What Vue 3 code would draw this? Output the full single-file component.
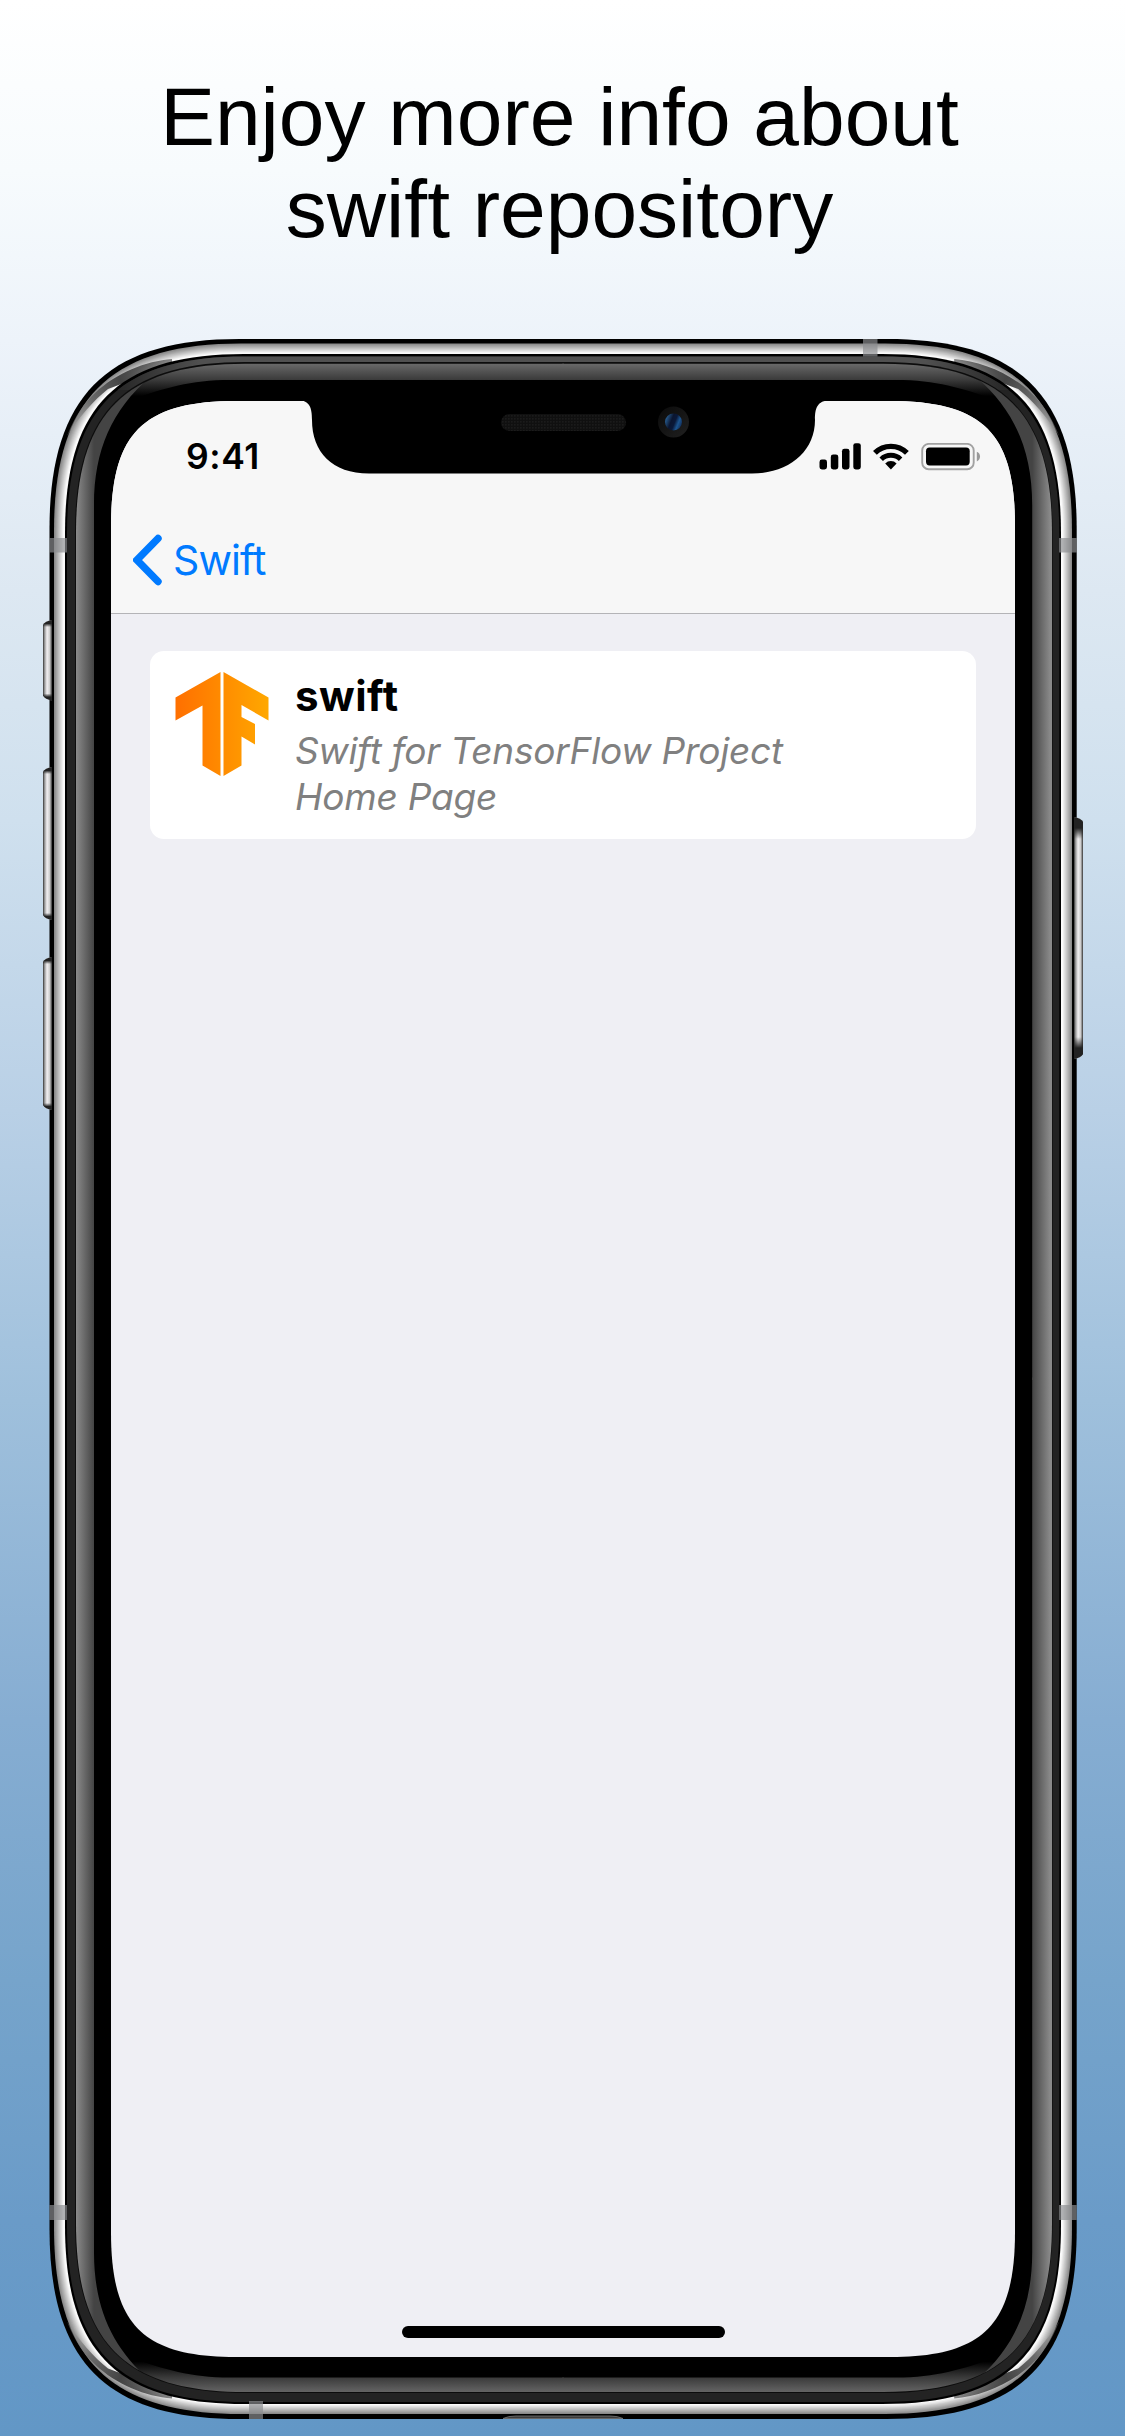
<script setup>
// Continuous-corner rounded rectangle
function squircle(l, t, r, b, a, k) {
  return `M${l} ${t + a}C${l} ${t + k} ${l + k} ${t} ${l + a} ${t}H${r - a}C${r - k} ${t} ${r} ${t + k} ${r} ${t + a}V${b - a}C${r} ${b - k} ${r - k} ${b} ${r - a} ${b}H${l + a}C${l + k} ${b} ${l} ${b - k} ${l} ${b - a}Z`
}

const outer = squircle(49.5, 339, 1076.7, 2419, 190, 57)
const steel = Array.from({ length: 11 }, (_, i) => {
  const v = Math.round(138 + Math.min(1, i / 9) * 112)
  return {
    d: squircle(54 + i, 343.5 + i, 1072 - i, 2414 - i, 187 - i * 0.8, 55.5 - i * 0.3),
    fill: `rgb(${v},${v},${v})`,
  }
})
const gap = squircle(65, 354, 1061, 2404, 179, 52)
const band = squircle(67, 356.5, 1059.3, 2402, 177, 52)
const bandInner = squircle(75, 362, 1052.6, 2393, 170, 50)
const gloss = squircle(76, 363.7, 1052, 2392, 169, 49)

const antennas = [
  { x: 49.5, y: 538, w: 17.5, h: 14.5 },
  { x: 1059, y: 538, w: 17.7, h: 14.5 },
  { x: 49.5, y: 2205, w: 17.5, h: 15 },
  { x: 1059, y: 2205, w: 17.7, h: 15 },
  { x: 863, y: 339, w: 14.5, h: 17.5 },
  { x: 249, y: 2401, w: 14, h: 18 },
]
const leftButtons = [
  { y: 620, h: 80.5 },
  { y: 767, h: 153 },
  { y: 957, h: 153 },
]
const corners = [
  'translate(0 0)',
  'translate(1126.2 0) scale(-1 1)',
  'translate(0 2757.5) scale(1 -1)',
  'translate(1126.2 2757.5) scale(-1 -1)',
]
</script>

<template>
  <main class="page">
    <h1 class="headline">Enjoy more info about<br />swift repository</h1>

    <section class="device">
      <svg class="frame" width="1125" height="2436" viewBox="0 0 1125 2436" aria-hidden="true">
        <defs>
          <linearGradient id="btn" x1="0" x2="1">
            <stop offset="0" stop-color="#333" />
            <stop offset=".18" stop-color="#999" />
            <stop offset=".45" stop-color="#f2f0f2" />
            <stop offset=".75" stop-color="#ccc" />
            <stop offset="1" stop-color="#333" />
          </linearGradient>
          <linearGradient id="cap" x1="0" x2="0" y1="0" y2="1">
            <stop offset="0" stop-color="#222" />
            <stop offset=".5" stop-color="#222" />
            <stop offset="1" stop-color="#222" stop-opacity="0" />
          </linearGradient>
          <linearGradient id="capEnd" x1="0" x2="0" y1="0" y2="1">
            <stop offset="0" stop-color="#222" stop-opacity="0" />
            <stop offset=".5" stop-color="#222" />
            <stop offset="1" stop-color="#222" />
          </linearGradient>
          <linearGradient id="sideL" gradientUnits="userSpaceOnUse" x1="76" x2="94" y1="0" y2="0">
            <stop offset="0" stop-color="#8a8a8a" />
            <stop offset="1" stop-color="#444" />
          </linearGradient>
          <linearGradient id="shine" gradientUnits="userSpaceOnUse" x1="0" x2="0" y1="364" y2="396">
            <stop offset="0" stop-color="#686868" />
            <stop offset=".5" stop-color="#3a3a3a" />
            <stop offset="1" stop-color="#000" />
          </linearGradient>
          <linearGradient id="fold" gradientUnits="userSpaceOnUse" x1="68" x2="165" y1="430" y2="359">
            <stop offset="0" stop-color="#999" stop-opacity=".4" />
            <stop offset=".3" stop-color="#6a6a6a" />
            <stop offset=".6" stop-color="#444" />
            <stop offset="1" stop-color="#333" stop-opacity=".6" />
          </linearGradient>
          <linearGradient id="topBand" gradientUnits="userSpaceOnUse" x1="110" x2="1016" y1="0" y2="0">
            <stop offset="0" stop-color="#232323" />
            <stop offset=".1" stop-color="#505050" />
            <stop offset=".9" stop-color="#505050" />
            <stop offset="1" stop-color="#232323" />
          </linearGradient>
          <clipPath id="glossClip"><path :d="gloss" /></clipPath>
          <clipPath id="topClip"><rect x="110" y="350" width="906" height="40" /></clipPath>
        </defs>

        <path :d="outer" fill="#000" />
        <path v-for="(s, i) in steel" :key="i" :d="s.d" :fill="s.fill" />
        <path
          v-for="c in corners"
          :key="c"
          :transform="c"
          d="M172 359C146 361 116 373 95 393C84 403 75 416 67 436C79 417 94 400 108 389L132 380L172 363Z"
          fill="url(#fold)"
        />
        <path :d="gap" fill="#000" />
        <path :d="band" fill="#232323" />
        <path :d="band" fill="url(#topBand)" clip-path="url(#topClip)" />
        <path :d="bandInner" fill="#0c0c0c" />
        <g clip-path="url(#glossClip)">
          <path :d="gloss" fill="#000" />
          <g v-for="c in corners" :key="c" :transform="c">
            <path d="M564 360V380H230C190 380 165 388 130 400V360Z" fill="url(#shine)" />
            <path d="M70 1380V340H150V377C112 410 94 450 94 505V1380Z" fill="url(#sideL)" />
          </g>
        </g>

        <rect
          v-for="(a, i) in antennas"
          :key="i"
          :x="a.x"
          :y="a.y"
          :width="a.w"
          :height="a.h"
          fill="#8c8e90"
          fill-opacity=".68"
        />
        <g v-for="b in leftButtons" :key="b.y" :transform="`translate(43 ${b.y})`">
          <path :d="`M9 0Q2 1 0 5V${b.h - 5}Q2 ${b.h - 1} 9 ${b.h}Z`" fill="url(#btn)" />
          <path d="M9 0Q2 1 0 5V7H9Z" fill="url(#cap)" />
          <path :d="`M9 ${b.h}Q2 ${b.h - 1} 0 ${b.h - 5}V${b.h - 7}H9Z`" fill="url(#capEnd)" />
        </g>
        <g transform="translate(1074 817)">
          <path d="M0 0Q7 1 9 5V237Q7 241 0 242Z" fill="url(#btn)" />
          <path d="M0 0Q7 1 9 5V22H0Z" fill="url(#cap)" />
          <path d="M0 242Q7 241 9 237V220H0Z" fill="url(#capEnd)" />
        </g>
        <path d="M503 2418.5Q508 2416 516 2416H610Q618 2416 623 2418.5Z" fill="#3c3c3c" stroke="#777" stroke-width=".8" />
      </svg>

      <div class="screen">
        <header class="bar">
          <div class="status">
            <span class="time">9:41</span>
            <svg class="signals" width="162" height="28" viewBox="0 0 162 28" aria-hidden="true">
              <rect x="0.5" y="16.5" width="7.5" height="10" rx="2.4" />
              <rect x="11.8" y="11.5" width="7.5" height="15" rx="2.4" />
              <rect x="23" y="5.8" width="7.5" height="20.7" rx="2.4" />
              <rect x="34.3" y=".2" width="7.5" height="26.3" rx="2.4" />
              <g fill="none" stroke="#000">
                <path d="M55.9 9.9a22.8 22.8 0 0 1 32 0" stroke-width="5.4" />
                <path d="M62.2 16.2a13.9 13.9 0 0 1 19.4 0" stroke-width="5" />
              </g>
              <path d="M66.2 20.4a8.2 8.2 0 0 1 11.4 0L71.9 26.4z" />
              <rect x="103.2" y=".9" width="51.5" height="25.3" rx="6.5" fill="none" stroke="#a2a2a2" stroke-width="1.9" />
              <rect x="107" y="4.6" width="43.7" height="17.8" rx="3.6" />
              <path d="M157.8 8.8q3.2 1.3 3.2 4.7t-3.2 4.9z" fill="#999" />
            </svg>
          </div>
          <nav class="back">
            <svg width="30" height="52" viewBox="0 0 30 52" aria-hidden="true">
              <path d="M25 4.5L4 26L25 47.5" fill="none" stroke="#007aff" stroke-width="7.4" stroke-linecap="round" stroke-linejoin="miter" />
            </svg>
            <span>Swift</span>
          </nav>
        </header>
        <article class="card">
          <svg class="logo" width="94" height="104" viewBox="0 0 94 104" aria-hidden="true">
            <defs>
              <linearGradient id="tf" gradientUnits="userSpaceOnUse" x1="0" x2="94" y1="0" y2="0">
                <stop offset="0" stop-color="#ff6f00" />
                <stop offset="1" stop-color="#ffa800" />
              </linearGradient>
            </defs>
            <path d="M45.5 0V104L27.500 93.5V33.5L.5 48.5V25.5ZM48.5 0L93.5 25.5V48.5L66.5 33V45L80 52V72.5L66.5 64.5V93.5L48.5 104Z" fill="url(#tf)" />
          </svg>
          <div class="info">
            <h2>swift</h2>
            <p>Swift for TensorFlow Project<br />Home Page</p>
          </div>
        </article>
        <div class="home"></div>
      </div>

      <svg class="notch" width="510" height="76" viewBox="0 0 510 76" aria-hidden="true">
        <defs>
          <pattern id="mesh" width="3" height="3" patternUnits="userSpaceOnUse">
            <rect width="3" height="3" fill="#101010" />
            <rect width="1.6" height="1.6" fill="#1b1b1b" />
          </pattern>
          <linearGradient id="lens" x1="0" x2="1" y1=".2" y2=".6">
            <stop offset="0" stop-color="#2f6da5" />
            <stop offset=".4" stop-color="#0a1530" />
            <stop offset=".6" stop-color="#0a1838" />
            <stop offset=".8" stop-color="#1c5590" />
            <stop offset="1" stop-color="#12305c" />
          </linearGradient>
          <linearGradient id="ring" x1="0" x2="1" y1="0" y2="1">
            <stop offset="0" stop-color="#0a0a0a" />
            <stop offset="1" stop-color="#202020" />
          </linearGradient>
        </defs>
        <path d="M-6 0C6 .5 8 8 8 20C8 52 28 73.5 65 73.5H448C484 73.5 511 52 511 20C511 8 513 1 526 0V-2H-6Z" fill="#000" />
        <rect x="197" y="14" width="125" height="17" rx="8.5" fill="url(#mesh)" />
        <circle cx="369.5" cy="22" r="15.5" fill="url(#ring)" />
        <circle cx="369.5" cy="22" r="8.5" fill="url(#lens)" />
      </svg>
    </section>
  </main>
</template>

<style>
body {
  margin: 0;
}
</style>

<style scoped>
.page {
  width: 1125px;
  height: 2436px;
  overflow: hidden;
  display: flex;
  flex-direction: column;
  background: linear-gradient(
    #ffffff 0,
    #f7fbfd 170px,
    #edf3fa 340px,
    #dde8f2 590px,
    #cfe0ee 820px,
    #b9d0e6 1110px,
    #9fc0dc 1400px,
    #86add2 1720px,
    #76a4cb 1980px,
    #6a9bc8 2220px,
    #6297c6 2436px
  );
}
.headline {
  margin: 0;
  padding: 71px 6px 0 0;
  height: 331px;
  box-sizing: border-box;
  flex: none;
  text-align: center;
  font: 400 82.1px/92.3px "Liberation Sans", Arial, sans-serif;
  color: #000;
  position: relative;
  z-index: 1;
}
.device {
  position: relative;
  margin-top: -331px;
  padding: 401px 0 0 111px;
  box-sizing: border-box;
  height: 2436px;
  flex: none;
}
.frame {
  position: absolute;
  left: 0;
  top: 0;
}
.screen {
  position: relative;
  width: 904px;
  height: 1956px;
  overflow: hidden;
  display: flex;
  flex-direction: column;
  background: #efeff4;
  clip-path: path("M0 125C0 32 32 0 125 0H779C872 0 904 32 904 125V1831C904 1924 872 1956 779 1956H125C32 1956 0 1924 0 1831Z");
  font-family: Inter, "Liberation Sans", sans-serif;
}
.bar {
  flex: none;
  height: 213px;
  box-sizing: border-box;
  border-bottom: 1px solid #b4b4b7;
  background: #f7f7f7;
}
.status {
  display: flex;
  justify-content: space-between;
  align-items: flex-start;
  padding: 42px 34px 0 75px;
  height: 136px;
  box-sizing: border-box;
}
.time {
  font-size: 35.5px;
  font-weight: 600;
  line-height: 28px;
  letter-spacing: 0.6px;
}
.back {
  display: flex;
  align-items: center;
  gap: 10.5px;
  padding-left: 21.5px;
  height: 46px;
  color: #007aff;
  font-size: 41px;
  letter-spacing: -0.9px;
}
.card {
  flex: none;
  display: flex;
  align-items: flex-start;
  gap: 26px;
  width: 826px;
  height: 188px;
  margin: 37px 0 0 39px;
  padding: 20.5px 25px;
  box-sizing: border-box;
  border-radius: 14px;
  background: #fff;
}
.logo {
  flex: none;
}
.info h2 {
  margin: -1px 0 0;
  font-size: 42px;
  line-height: 50px;
  font-weight: 700;
  letter-spacing: 0.5px;
}
.info p {
  margin: 7px 0 0;
  font-size: 37px;
  line-height: 46px;
  font-style: italic;
  letter-spacing: -0.2px;
  color: #808080;
  white-space: nowrap;
}
.home {
  width: 323px;
  height: 12px;
  border-radius: 6px;
  margin: auto auto 19px 291px;
  background: #000;
}
.notch {
  position: absolute;
  left: 304px;
  top: 400px;
  overflow: visible;
}
</style>
